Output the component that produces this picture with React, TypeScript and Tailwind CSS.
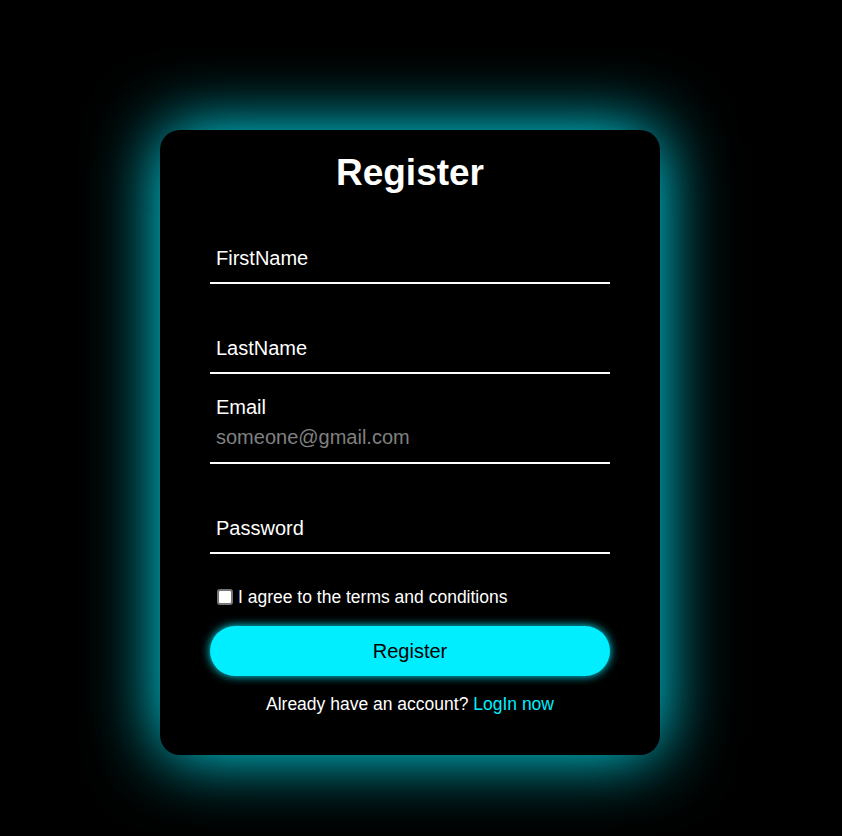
export default function App() {
  return (
    <main
      className="min-h-screen w-full bg-black flex pl-[160px] pt-[130px]"
      style={{ fontFamily: '"Liberation Sans", Arial, sans-serif' }}
    >
      <div className="w-[500px] h-[625px] rounded-[20px] bg-black shadow-[0_0_70px_#0ef] px-[50px] pt-[21px] flex flex-col">
        <h1 className="text-center text-white text-[37px] font-bold leading-[44px]">Register</h1>

        <div className="mt-[39px] flex flex-col gap-[40px]">
          <Field label="FirstName" />
          <Field label="LastName" />
          <Field label="Email" placeholder="someone@gmail.com" />
          <Field label="Password" />
        </div>

        <label className="mt-[33px] h-[20px] flex items-center gap-[5px] pl-[7px] text-white text-[17.5px]">
          <span className="w-[16px] h-[16px] rounded-[3px] bg-white border-2 border-[#767676]" />
          I agree to the terms and conditions
        </label>

        <button className="mt-[19px] h-[50px] w-full rounded-full bg-[#0ef] shadow-[0_0_10px_#0ef] text-black text-[20px]">
          Register
        </button>

        <p className="mt-[18px] text-center text-white text-[17.5px] leading-[20px]">
          Already have an account? <a className="text-[#0ef]">LogIn now</a>
        </p>
      </div>
    </main>
  );
}

function Field({ label, placeholder }: { label: string; placeholder?: string }) {
  return (
    <div className="relative h-[50px] border-b-2 border-white flex items-center pl-[6px]">
      {placeholder ? (
        <>
          <span className="absolute left-[6px] top-[-19px] text-white text-[20px] leading-[24px]">{label}</span>
          <span className="text-[#808080] text-[20px] leading-[24px] -mt-[3px]">{placeholder}</span>
        </>
      ) : (
        <span className="text-white text-[20px] leading-[24px]">{label}</span>
      )}
    </div>
  );
}
